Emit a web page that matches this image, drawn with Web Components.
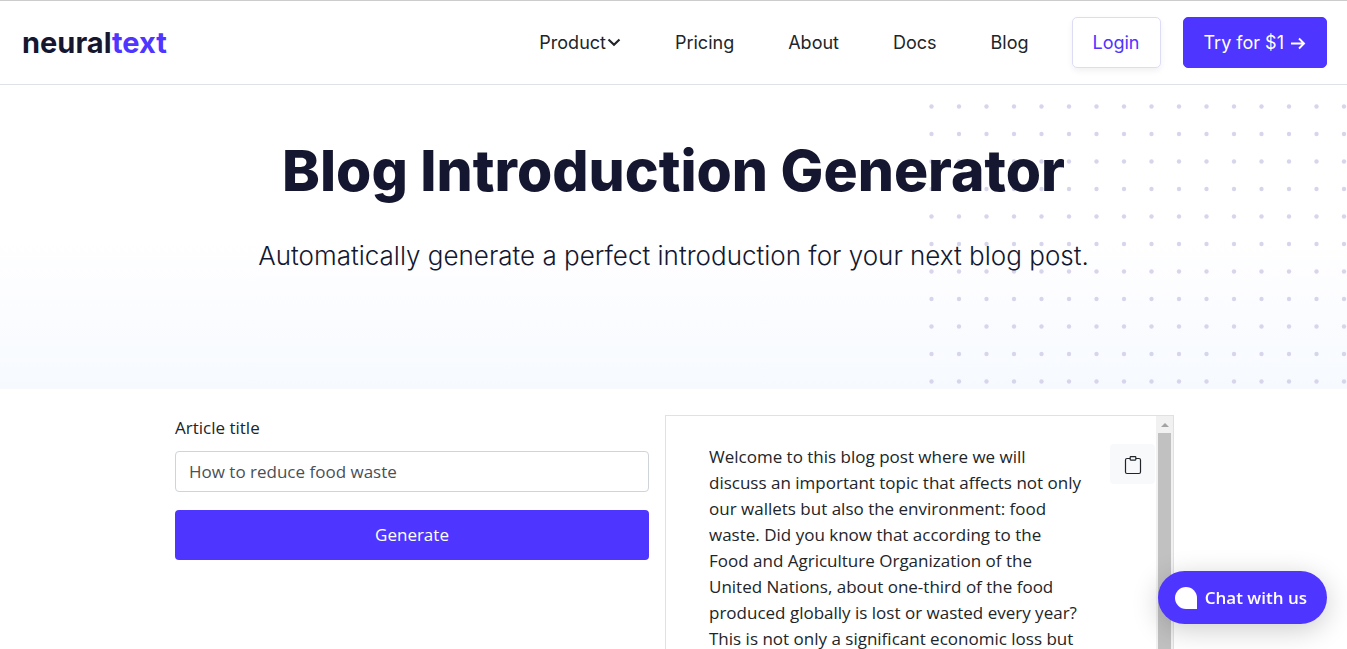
<!DOCTYPE html>
<html lang="en">
<head>
<meta charset="utf-8">
<meta name="viewport" content="width=device-width, initial-scale=1">
<title>Blog Introduction Generator</title>
<style>
:root{--brand:#4e35ff;--ink:#14172f;--text:#212529;--line:#dee2e6;--ui:"Inter",sans-serif;--copy:"Segoe UI","Open Sans",sans-serif}
html{scrollbar-width:none}
body{margin:0;background:#fff;color:var(--text);font:17px/26px var(--copy)}
</style>
</head>
<body>
<nt-header>
  <nt-nav-link href="#product" caret>Product</nt-nav-link>
  <nt-nav-link href="#pricing">Pricing</nt-nav-link>
  <nt-nav-link href="#about">About</nt-nav-link>
  <nt-nav-link href="#docs">Docs</nt-nav-link>
  <nt-nav-link href="#blog">Blog</nt-nav-link>
</nt-header>
<main>
  <nt-hero>
    <span slot="title">Blog Introduction Generator</span>
    <span slot="lead">Automatically generate a perfect introduction for your next blog post.</span>
  </nt-hero>
  <nt-tool>
    <nt-form slot="form"></nt-form>
    <nt-result slot="result">Welcome to this blog post where we will discuss an important topic that affects not only our wallets but also the environment: food waste. Did you know that according to the Food and Agriculture Organization of the United Nations, about one-third of the food produced globally is lost or wasted every year? This is not only a significant economic loss but</nt-result>
  </nt-tool>
</main>
<nt-chat>Chat with us</nt-chat>
<script>
const define = (name, html) => customElements.define(name, class extends HTMLElement {
  constructor() {
    super();
    this.attachShadow({ mode: 'open' }).innerHTML = '<style>*{box-sizing:border-box}</style>' + html;
  }
  connectedCallback() {
    const link = this.shadowRoot.querySelector('a[data-link]');
    if (link) link.href = this.getAttribute('href');
  }
});

define('nt-nav-link', `
<style>
:host{display:block}
a{display:flex;align-items:center;gap:1px;color:#212529;text-decoration:none;font:18px/25px var(--ui)}
svg{display:none}
:host([caret]) svg{display:block}
</style>
<a data-link><slot></slot><svg width="14" height="14" viewBox="0 0 14 14" fill="none" stroke="currentColor" stroke-width="2.2" aria-hidden="true"><path d="M1.5 3.5 7 8.8l5.500-5.300"/></svg></a>`);

define('nt-header', `
<style>
:host{display:block;border-top:1px solid #ccc;border-bottom:1px solid var(--line)}
header{display:flex;align-items:center;justify-content:space-between;padding:16px 20px 16px 22px}
a{text-decoration:none;font:18px/25px var(--ui)}
.logo{font-size:29px;font-weight:700;color:var(--ink)}
.logo b{font-weight:700;color:var(--brand)}
.right{display:flex;align-items:center;gap:22px}
nav{display:flex;gap:54px;margin-right:21px}
.btn{padding:12px 20px;border:1px solid var(--brand);border-radius:5px}
.login{color:var(--brand);border-color:#dcdcf5;box-shadow:0 3px 6px #14172f0f}
.try{display:flex;align-items:center;gap:6px;color:#fff;background:var(--brand)}
</style>
<header>
  <a class="logo" href="#home">neural<b>text</b></a>
  <div class="right">
    <nav><slot></slot></nav>
    <a class="btn login" href="#login">Login</a>
    <a class="btn try" href="#signup">Try for $1 <svg width="16" height="16" viewBox="0 0 16 16" fill="none" stroke="currentColor" stroke-width="1.900" aria-hidden="true"><path d="M1 8.500h13M9 3.500l5 5-5 5"/></svg></a>
  </div>
</header>`);

define('nt-hero', `
<style>
:host{display:block;position:relative;color:var(--ink);text-align:center;background:linear-gradient(#fff 50%,#fbfcff 75%,#f6faff)}
.dots{position:absolute;top:19px;right:0;width:418px;height:100%;max-height:280px}
.copy{position:relative;padding:50px 16px 113px}
h1{margin:0;font:800 57px/72px var(--ui)}
p{margin:29px 0 0;font:300 26px/40px var(--ui)}
</style>
<svg class="dots" aria-hidden="true"><defs><pattern id="d" width="55" height="55" patternUnits="userSpaceOnUse"><g fill="#d7d5eb"><circle cx="2.500" cy="2.500" r="2.200"/><circle cx="30" cy="2.500" r="2.200"/><circle cx="2.500" cy="30" r="2.200"/><circle cx="30" cy="30" r="2.200"/></g></pattern></defs><rect width="100%" height="100%" fill="url(#d)"/></svg>
<div class="copy"><h1><slot name="title"></slot></h1><p><slot name="lead"></slot></p></div>`);

define('nt-tool', `
<style>
:host{display:grid;grid-template-columns:minmax(0,474fr) minmax(0,509fr);gap:16px;max-width:999px;margin:26px auto 0;padding:0 15px 0 17px}
</style>
<slot name="form"></slot><slot name="result"></slot>`);

define('nt-form', `
<style>
:host{display:block}
form{display:flex;flex-direction:column}
label{line-height:26px;margin-bottom:10px}
input{height:41px;padding:0 13px;border:1px solid #ced4da;border-radius:4px;color:#495057;background:#fff;font:inherit;margin-bottom:18px}
button{height:50px;border:0;border-radius:4px;background:var(--brand);color:#fff;font:inherit;cursor:pointer}
</style>
<form onsubmit="return false">
  <label for="title">Article title</label>
  <input id="title" type="text" value="How to reduce food waste">
  <button type="submit">Generate</button>
</form>`);

define('nt-result', `
<style>
:host{display:grid;grid-template-columns:minmax(0,1fr) 45px 17px;column-gap:1px;height:400px;overflow:hidden;border:1px solid var(--line)}
.text{padding:28px 28px 0 43px}
p{margin:0}
button{display:grid;place-items:center;height:40px;margin-top:28px;padding:0;border:0;border-radius:4px;background:#f8f9fa;color:#212529;cursor:pointer}
.bar{background:#f1f1f1;display:grid;grid-template-rows:17px 1fr;justify-items:center}
.bar svg{align-self:center}
.thumb{width:13px;background:#c1c1c1;margin-bottom:40px}
</style>
<div class="text"><p><slot></slot></p></div>
<button type="button" aria-label="Copy to clipboard"><svg width="18" height="22" viewBox="0 0 18 22" fill="none" stroke="currentColor" stroke-width="1.200" aria-hidden="true"><path d="M6 5.500H3Q1.500 5.500 1.500 7v12Q1.500 20.500 3 20.500h12q1.500 0 1.500-1.500V7Q16.500 5.500 15 5.500h-3"/><rect x="6.200" y="3.700" width="5.600" height="3.400" rx=".5"/></svg></button>
<div class="bar" aria-hidden="true"><svg width="8" height="4" viewBox="0 0 8 4"><path d="M0 4 4 0l4 4z" fill="#a3a3a3"/></svg><div class="thumb"></div></div>`);

define('nt-chat', `
<style>
:host{position:fixed;right:20px;bottom:25px}
button{display:flex;align-items:center;gap:8px;height:53px;padding:0 20px 0 17px;border:0;border-radius:27px;background:var(--brand);color:#fff;font:600 17px/26px var(--copy);box-shadow:0 6px 28px #0003;cursor:pointer}
i{width:22px;height:22px;border-radius:11px 11px 0 11px;background:#fff}
</style>
<button type="button"><i></i><slot></slot></button>`);
</script>
</body>
</html>
